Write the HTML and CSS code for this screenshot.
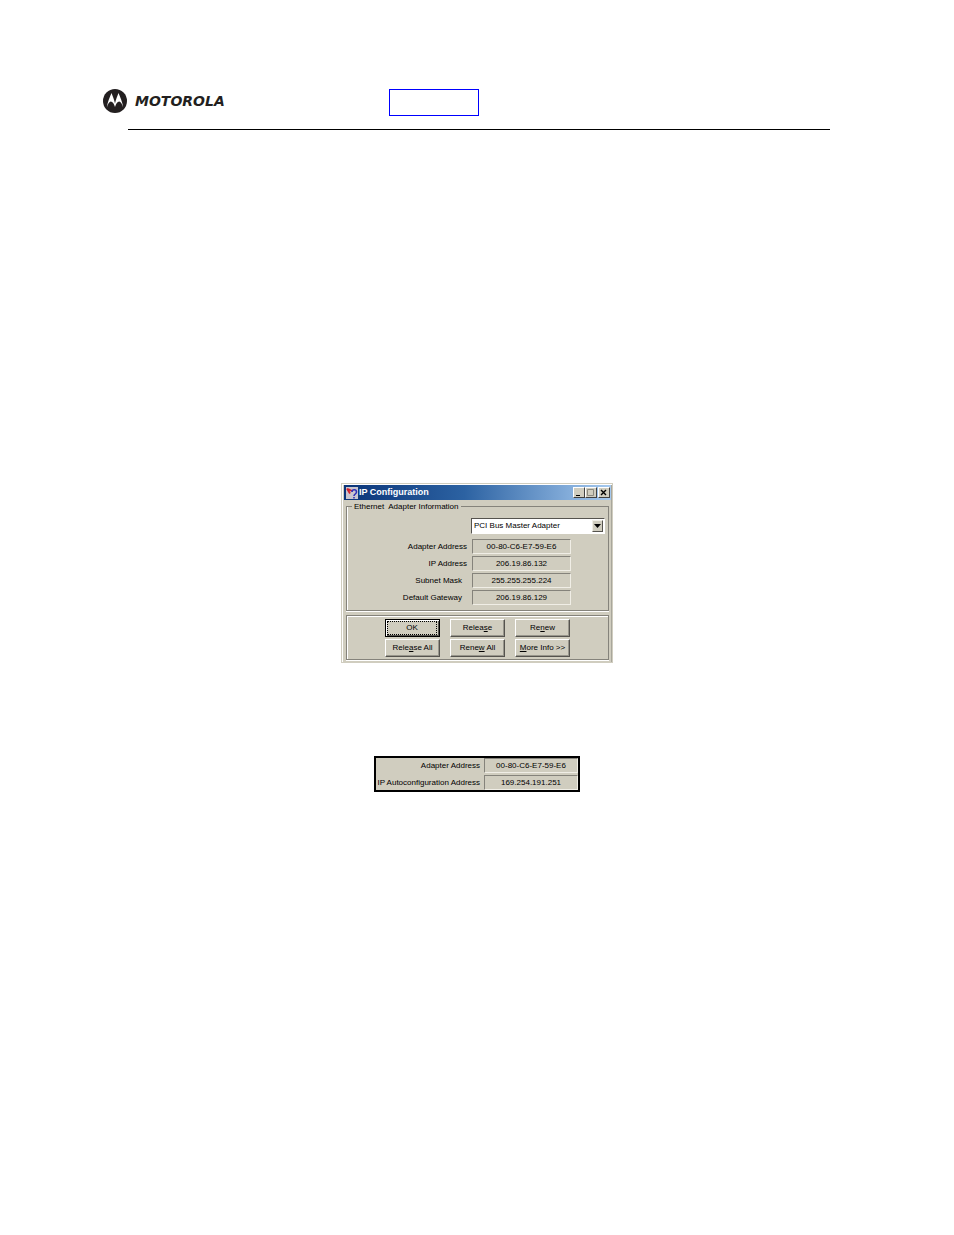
FILE: index.html
```html
<!DOCTYPE html>
<html lang="en">
<head>
<meta charset="utf-8">
<title>IP Configuration</title>
<link rel="stylesheet" href="styles.css">
</head>
<body>
<header class="header">
  <div class="brand">
    <svg class="emblem" viewBox="0 0 24 24" aria-hidden="true">
      <circle cx="12" cy="12" r="12" fill="#231f20"/>
      <path fill="#fff" d="M8.500 4C6.800 8 4.500 13 3.800 18.500c1.200-3.700 2.700-6 4-6 1.800 0 3.200 2.400 4.200 5.500 1-3.100 2.400-5.500 4.200-5.500 1.300 0 2.800 2.300 4 6-.7-5.500-3-10.500-4.700-14.500-1.200 3.200-2.700 6.700-3.500 10.500-.8-3.800-2.300-7.300-3.500-10.500z"/>
    </svg>
    <span class="wordmark">MOTOROLA</span>
  </div>
  <a class="home" href="#" aria-label="Home"></a>
</header>
<hr class="rule">

<main class="content">
  <section class="window">
    <div class="titlebar">
      <svg class="app-icon" viewBox="0 0 12 12" aria-hidden="true">
        <rect width="12" height="12" fill="#c9c6cf"/>
        <path d="M1 1.500l3 5M2 2l4 2" fill="none" stroke="#d3202c" stroke-width="1.800"/>
        <path d="M6 5c0-3 4.500-3 4.500 0 0 2-2.500 2-2.500 4M8 10v1.500" fill="none" stroke="#3030b8" stroke-width="1.600"/>
      </svg>
      <h1 class="title">IP Configuration</h1>
      <div class="controls">
        <button class="control" type="button" aria-label="Minimize"><svg viewBox="0 0 10 9"><path d="M2 7.500h4" stroke="#000"/></svg></button>
        <button class="control" type="button" aria-label="Maximize" disabled><svg viewBox="0 0 10 9"><path d="M1.500 1.500h6v6h-6z" fill="none" stroke="#8c8a80"/></svg></button>
        <button class="control close" type="button" aria-label="Close"><svg viewBox="0 0 10 9"><path d="M2 2l5 5M7 2l-5 5" stroke="#000" stroke-width="1.400"/></svg></button>
      </div>
    </div>
    <form class="form">
      <fieldset class="group">
        <legend class="legend">Ethernet&nbsp; Adapter Information</legend>
        <div class="picker">
          <select class="select" aria-label="Adapter"><option>PCI Bus Master Adapter</option></select>
          <span class="arrow"><svg viewBox="0 0 7 4"><path d="M0 0h7L3.500 4z"/></svg></span>
        </div>
        <div class="fields">
          <label for="adapter">Adapter Address</label><input class="field" id="adapter" readonly value="00-80-C6-E7-59-E6">
          <label for="ip">IP Address</label><input class="field" id="ip" readonly value="206.19.86.132">
          <label class="inset" for="mask">Subnet Mask</label><input class="field" id="mask" readonly value="255.255.255.224">
          <label class="inset" for="gateway">Default Gateway</label><input class="field" id="gateway" readonly value="206.19.86.129">
        </div>
      </fieldset>
      <div class="actions">
        <button class="button primary" type="button"><span class="focus">OK</span></button>
        <button class="button" type="button">Relea<u>s</u>e</button>
        <button class="button" type="button">Re<u>n</u>ew</button>
        <button class="button" type="button">Rele<u>a</u>se All</button>
        <button class="button" type="button">Rene<u>w</u> All</button>
        <button class="button" type="button"><u>M</u>ore Info &gt;&gt;</button>
      </div>
    </form>
  </section>

  <section class="excerpt">
    <label for="adapter2">Adapter Address</label><input class="field" id="adapter2" readonly value="00-80-C6-E7-59-E6">
    <label for="auto">IP Autoconfiguration Address</label><input class="field" id="auto" readonly value="169.254.191.251">
  </section>
</main>
</body>
</html>
```
FILE: styles.css
```css
* {
  box-sizing: border-box;
}

body {
  margin: 0;
  background: #fff;
  color: #000;
  font: 8px/12px "Liberation Sans", Arial, sans-serif;
}

.header {
  display: flex;
  align-items: flex-start;
  padding: 89px 124px 0 103px;
}

.brand {
  display: flex;
  align-items: center;
  width: 286px;
}

.emblem {
  width: 24px;
  height: 24px;
  margin-right: 8px;
}

.wordmark {
  color: #231f20;
  font: italic bold 14px/24px "DejaVu Sans", sans-serif;
}

.home {
  width: 90px;
  height: 27px;
  border: 1px solid #00f;
}

.rule {
  height: 1px;
  margin: 13px 124px 0 128px;
  border: 0;
  background: #000;
}

.content {
  display: flex;
  flex-direction: column;
  align-items: center;
  padding-top: 353px;
}

.window {
  width: 272px;
  padding: 1px 1px 2px 2px;
  border: 1px solid #d0cdbf;
  background: #d0cdbf;
  box-shadow: inset 1px 1px #fff, inset -1px 0 #a9a79c;
}

.titlebar {
  display: flex;
  align-items: center;
  height: 15px;
  padding: 0 1px 0 2px;
  background: linear-gradient(90deg, #0a3478, #2c62a2 45%, #a6caf0);
}

.app-icon {
  width: 12px;
  height: 12px;
  margin-right: 1px;
}

.title {
  flex: 1;
  margin: 0;
  color: #fff;
  font: bold 9px/15px "Liberation Sans", Arial, sans-serif;
}

.controls {
  display: flex;
}

.control {
  width: 12px;
  height: 11px;
  padding: 0;
  border: 1px solid;
  border-color: #fff #404040 #404040 #fff;
  background: #d0cdbf;
}

.control svg {
  display: block;
  width: 10px;
  height: 9px;
}

.close {
  margin-left: 1px;
}

.form {
  padding: 0 2px;
}

.group {
  min-width: 0;
  margin: 0;
  padding: 5px 3px 5px;
  border: 1px solid #85837b;
  box-shadow: inset 1px 0 #fff, 0 1px #fff;
}

.legend {
  margin-left: 2px;
  padding: 0 2px;
  line-height: 13px;
}

.picker {
  position: relative;
  width: 134px;
  margin-left: auto;
}

.select {
  display: block;
  width: 100%;
  height: 16px;
  padding: 0 14px 0 2px;
  border: 1px solid;
  border-color: #55534e #fff #fff #55534e;
  border-radius: 0;
  background: #fff;
  color: #000;
  font: inherit;
  appearance: none;
}

.arrow {
  position: absolute;
  top: 2px;
  right: 2px;
  display: grid;
  place-items: center;
  width: 11px;
  height: 12px;
  border: 1px solid;
  border-color: #f0eee6 #55534e #55534e #f0eee6;
  background: #d0cdbf;
  pointer-events: none;
}

.arrow svg {
  width: 7px;
  height: 4px;
}

.fields {
  display: grid;
  grid-template-columns: 1fr 99px;
  gap: 2px 5px;
  padding: 5px 34px 0 0;
  text-align: right;
  line-height: 15px;
}

.inset {
  padding-right: 5px;
}

.field {
  width: 99px;
  height: 15px;
  padding: 0;
  border: 1px solid;
  border-color: #85837b #f0eee6 #f0eee6 #85837b;
  background: #d0cdbf;
  color: #000;
  font: inherit;
  text-align: center;
}

.actions {
  display: grid;
  grid-template-columns: repeat(3, 55px);
  justify-content: center;
  gap: 2px 10px;
  margin-top: 4px;
  padding: 3px 0 2px 0;
  border: 1px solid #85837b;
  box-shadow: inset 1px 1px #fff, 0 1px #fff;
}

.button {
  height: 18px;
  padding: 0;
  border: 1px solid;
  border-color: #fff #55534e #55534e #fff;
  background: #d0cdbf;
  box-shadow: inset -1px -1px #98968c;
  color: #000;
  font: inherit;
  white-space: nowrap;
}

.primary {
  padding: 1px 2px 2px 1px;
  border-color: #000;
  box-shadow: inset 1px 1px #fff, inset -1px -1px #55534e;
}

.focus {
  display: block;
  border: 1px dotted #000;
}

.excerpt {
  display: grid;
  grid-template-columns: 1fr 94px;
  gap: 2px 4px;
  width: 206px;
  margin-top: 93px;
  border: 2px solid #000;
  background: #d0cdbf;
  text-align: right;
  line-height: 15px;
}

.excerpt label {
  white-space: nowrap;
}

.excerpt .field {
  width: 94px;
}
```
